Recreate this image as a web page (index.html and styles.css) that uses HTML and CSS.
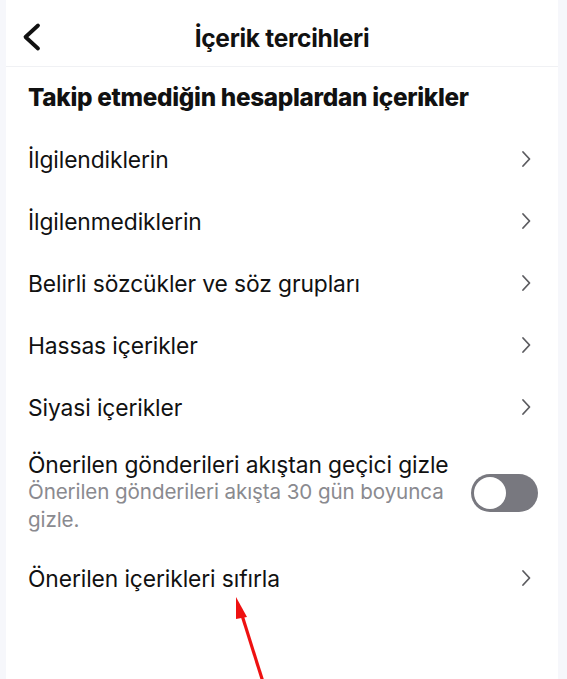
FILE: index.html
```html
<!DOCTYPE html>
<html lang="tr">
<head>
  <meta charset="UTF-8">
  <meta name="viewport" content="width=device-width, initial-scale=1.0">
  <title>İçerik tercihleri</title>
  <link rel="stylesheet" href="styles.css">
</head>
<body>
  <div class="screen">
    <!-- üst bar -->
    <header class="topbar">
      <button class="back" aria-label="Geri">
        <svg width="22" height="30" viewBox="0 0 22 30"><path d="M17 3.5 L4.5 15 L17 26.5" fill="none" stroke="#111" stroke-width="3.8" stroke-linecap="round" stroke-linejoin="round"/></svg>
      </button>
      <h1>İçerik tercihleri</h1>
    </header>

    <h2 class="section-title">Takip etmediğin hesaplardan içerikler</h2>

    <ul class="list">
      <li class="row"><span>İlgilendiklerin</span><svg class="chev" width="10" height="18" viewBox="0 0 10 18"><path d="M2 2 L8.5 9 L2 16" /></svg></li>
      <li class="row"><span>İlgilenmediklerin</span><svg class="chev" width="10" height="18" viewBox="0 0 10 18"><path d="M2 2 L8.5 9 L2 16" /></svg></li>
      <li class="row"><span>Belirli sözcükler ve söz grupları</span><svg class="chev" width="10" height="18" viewBox="0 0 10 18"><path d="M2 2 L8.5 9 L2 16" /></svg></li>
      <li class="row"><span>Hassas içerikler</span><svg class="chev" width="10" height="18" viewBox="0 0 10 18"><path d="M2 2 L8.5 9 L2 16" /></svg></li>
      <li class="row"><span>Siyasi içerikler</span><svg class="chev" width="10" height="18" viewBox="0 0 10 18"><path d="M2 2 L8.5 9 L2 16" /></svg></li>
      <li class="row toggle-row">
        <div class="texts">
          <div class="row-title">Önerilen gönderileri akıştan geçici gizle</div>
          <div class="row-sub">Önerilen gönderileri akışta 30 gün boyunca gizle.</div>
        </div>
        <div class="switch"><div class="knob"></div></div>
      </li>
      <li class="row"><span>Önerilen içerikleri sıfırla</span><svg class="chev" width="10" height="18" viewBox="0 0 10 18"><path d="M2 2 L8.5 9 L2 16" /></svg></li>
    </ul>
  </div>

  <!-- kırmızı ok -->
  <svg class="arrow" width="60" height="100" viewBox="0 0 60 100">
    <line x1="16" y1="22" x2="38" y2="92" stroke="#ee1111" stroke-width="3.2"/>
    <polygon points="11,7 22,27 11,29" fill="#ee1111"/>
  </svg>
</body>
</html>
```

FILE: styles.css
```css
body {
  margin: 0;
  background: #f6f7fb;
  font-family: Inter, "Liberation Sans", sans-serif;
  color: #111;
  height: 679px;
  overflow: hidden;
}

/* === ANA EKRAN === */
.screen {
  margin: 0 9px 0 6px;
  background: #fff;
  height: 100%;
}

.topbar {
  height: 67px;
  display: flex;
  align-items: center;
  justify-content: center;
  position: relative;
  border-bottom: 1px solid #f0f1f4;
  box-sizing: border-box;
}

.topbar h1 {
  margin: 0;
  font-size: 24.5px;
  font-weight: 700;
  letter-spacing: -0.3px;
  padding-top: 9px;
}

.back {
  position: absolute;
  left: 15px;
  top: 22px;
  background: none;
  border: none;
  padding: 0;
}

.section-title {
  margin: 0;
  height: 61px;
  line-height: 61px;
  padding-left: 22px;
  font-size: 24.3px;
  font-weight: 800;
  letter-spacing: -0.3px;
}

/* === ZOZNAM === */
.list {
  list-style: none;
  margin: 0;
  padding: 0;
}

.row {
  height: 62px;
  display: flex;
  align-items: center;
  justify-content: space-between;
  padding: 0 27px 0 22px;
  font-size: 22.8px;
  letter-spacing: -0.1px;
}

.chev {
  fill: none;
  stroke: #5c5c60;
  stroke-width: 1.8;
  stroke-linecap: round;
  stroke-linejoin: round;
}

.toggle-row {
  height: auto;
  padding: 13px 20px 13px 22px;
}

.texts {
  flex: 1;
  min-width: 0;
}

.row-title {
  line-height: 27px;
  white-space: nowrap;
}

.row-sub {
  line-height: 28px;
  font-size: 20.6px;
  color: #8a8a8f;
  max-width: 430px;
}

.switch {
  width: 67px;
  height: 38px;
  border-radius: 19px;
  background: #78787f;
  flex-shrink: 0;
  position: relative;
}

.knob {
  position: absolute;
  left: 3px;
  top: 3px;
  width: 32px;
  height: 32px;
  border-radius: 50%;
  background: #fff;
}

.arrow {
  position: absolute;
  left: 225px;
  top: 590px;
}
```
